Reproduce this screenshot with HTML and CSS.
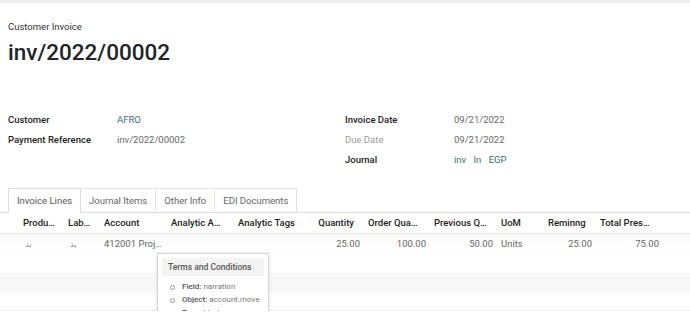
FILE: index.html
```html
<!DOCTYPE html>
<html lang="en">
<head>
    <meta charset="UTF-8">
    <title>inv/2022/00002</title>
    <link rel="stylesheet" href="styles.css">
</head>
<body>

<div class="topbar"></div>

<div class="sheet">
    <div class="title_block">
        <div class="doc_type">Customer Invoice</div>
        <h1 class="doc_name">inv/2022/00002</h1>
    </div>

    <div class="groups">
        <div class="group">
            <div class="field">
                <span class="label">Customer</span>
                <span class="value link">AFRO</span>
            </div>
            <div class="field">
                <span class="label">Payment Reference</span>
                <span class="value">inv/2022/00002</span>
            </div>
        </div>
        <div class="group">
            <div class="field">
                <span class="label">Invoice Date</span>
                <span class="value">09/21/2022</span>
            </div>
            <div class="field">
                <span class="label muted">Due Date</span>
                <span class="value">09/21/2022</span>
            </div>
            <div class="field">
                <span class="label">Journal</span>
                <span class="value link">inv <span class="sep">In</span> EGP</span>
            </div>
        </div>
    </div>
</div>

<ul class="tabs">
    <li class="tab active">Invoice Lines</li>
    <li class="tab">Journal Items</li>
    <li class="tab">Other Info</li>
    <li class="tab">EDI Documents</li>
</ul>

<div class="lines">
    <table class="lines_table">
        <colgroup>
            <col class="c_handle">
            <col class="c_product">
            <col class="c_label">
            <col class="c_account">
            <col class="c_analytic">
            <col class="c_tags">
            <col class="c_qty">
            <col class="c_order">
            <col class="c_prev">
            <col class="c_uom">
            <col class="c_rem">
            <col class="c_total">
            <col>
        </colgroup>
        <thead>
        <tr>
            <th></th>
            <th>Produ…</th>
            <th>Lab…</th>
            <th>Account</th>
            <th class="cut">Analytic A…</th>
            <th>Analytic Tags</th>
            <th class="num sort">Quantity</th>
            <th>Order Qua…</th>
            <th>Previous Q…</th>
            <th>UoM</th>
            <th>Reminng</th>
            <th>Total Pres…</th>
            <th></th>
        </tr>
        </thead>
        <tbody>
        <tr>
            <td></td>
            <td class="ar">بد</td>
            <td class="ar">بد</td>
            <td>412001 Proj…</td>
            <td></td>
            <td></td>
            <td class="num">25.00</td>
            <td class="num">100.00</td>
            <td class="num">50.00</td>
            <td>Units</td>
            <td class="num">25.00</td>
            <td class="num">75.00</td>
            <td></td>
        </tr>
        <tr><td colspan="13"></td></tr>
        <tr class="striped"><td colspan="13"></td></tr>
        <tr><td colspan="13"></td></tr>
        </tbody>
    </table>

    <div class="tooltip">
        <div class="tooltip_head">Terms and Conditions</div>
        <ul class="tooltip_list">
            <li><b>Field:</b> narration</li>
            <li><b>Object:</b> account.move</li>
            <li><b>Type:</b> html</li>
        </ul>
    </div>
</div>

</body>
</html>
```

FILE: styles.css
```css
* {
    box-sizing: border-box;
    margin: 0;
    padding: 0;
}

body {
    font-family: Roboto, "Liberation Sans", sans-serif;
    font-size: 9.5px;
    color: #4c4c4c;
    background: #fff;
    overflow: hidden;
}

li {
    list-style: none;
}

.topbar {
    height: 3px;
    background-color: #f0f0f0;
}

.sheet {
    padding: 0 8px;
}

.title_block {
    padding-top: 18px;
}

.doc_type {
    color: #333;
    font-size: 9.5px;
    line-height: 12px;
}

.doc_name {
    font-size: 22.5px;
    font-weight: 500;
    color: #212529;
    line-height: 26px;
    margin-top: 6px;
}

.groups {
    display: grid;
    grid-template-columns: 337px 1fr;
    margin-top: 44px;
}

.field {
    display: flex;
    height: 20px;
    align-items: center;
}

.label {
    width: 109px;
    font-weight: 500;
    color: #222;
}

.label.muted {
    font-weight: 400;
    color: #999;
}

.value {
    color: #666;
}

.value.link {
    color: #3c6e71;
}

.sep {
    margin: 0 5px;
}

.tabs {
    display: flex;
    margin-top: 19px;
    padding-left: 8px;
    border-bottom: 1px solid #dcdcdc;
    height: 25px;
}

.tab {
    padding: 0 8px;
    line-height: 24px;
    color: #666;
    border: 1px solid #e4e4e4;
    border-bottom: none;
    border-left: none;
    background: #fff;
}

.tab:first-child {
    border-left: 1px solid #e4e4e4;
}

.tab.active {
    color: #555;
    border-color: #dcdcdc;
    border-left: 1px solid #dcdcdc;
    height: 25px;
}

.lines {
    position: relative;
}

.lines_table {
    width: 100%;
    table-layout: fixed;
    border-collapse: collapse;
    border-bottom: 1px solid #eee;
}

.c_handle { width: 19px; }
.c_product { width: 45px; }
.c_label { width: 36px; }
.c_account { width: 67px; }
.c_analytic { width: 67px; }
.c_tags { width: 66px; }
.c_qty { width: 64px; }
.c_order { width: 66px; }
.c_prev { width: 67px; }
.c_uom { width: 47px; }
.c_rem { width: 52px; }
.c_total { width: 67px; }

.lines_table th {
    height: 20px;
    font-weight: 500;
    color: #222;
    text-align: left;
    padding: 0 3px 0 4px;
    white-space: nowrap;
    overflow: hidden;
    border-bottom: 1px solid #ececec;
    box-shadow: 0 2px 3px rgba(0, 0, 0, 0.04);
}

.lines_table th.num {
    text-align: right;
}

.lines_table th.sort {
    padding-right: 10px;
}

.lines_table th.cut {
    padding-right: 10px;
}

.lines_table td {
    height: 20px;
    padding: 0 4px;
    color: #666;
    white-space: nowrap;
    overflow: hidden;
}

.lines_table td.num {
    text-align: right;
}

.lines_table td.ar {
    font-family: "Noto Sans", "DejaVu Sans", sans-serif;
    font-size: 8px;
    color: #888;
    padding-left: 6px;
}

.lines_table tbody tr:first-child td {
    background: linear-gradient(#f7f7f7, #fff 60%);
}

.lines_table tr.striped td {
    background: #f8f8f8;
}

.lines_table tbody tr:last-child td {
    height: 17px;
}

.tooltip {
    position: absolute;
    left: 157px;
    top: 40px;
    width: 112px;
    height: 62px;
    overflow: hidden;
    background: #fff;
    border: 1px solid #d6d6d6;
    border-bottom: none;
    box-shadow: 0 1px 4px rgba(0, 0, 0, 0.12);
    padding: 4px 4px;
}

.tooltip_head {
    background: #f4f4f4;
    color: #555;
    font-weight: 500;
    font-size: 8.5px;
    line-height: 18px;
    padding-left: 6px;
}

.tooltip_list {
    margin-top: 4px;
    padding-left: 8px;
}

.tooltip_list li {
    font-size: 8px;
    line-height: 13px;
    color: #777;
    position: relative;
    padding-left: 12px;
    white-space: nowrap;
}

.tooltip_list li::before {
    content: "";
    position: absolute;
    left: 0;
    top: 5px;
    width: 3px;
    height: 3px;
    border: 1px solid #999;
    border-radius: 50%;
}

.tooltip_list b {
    font-weight: 500;
    color: #555;
}
```
